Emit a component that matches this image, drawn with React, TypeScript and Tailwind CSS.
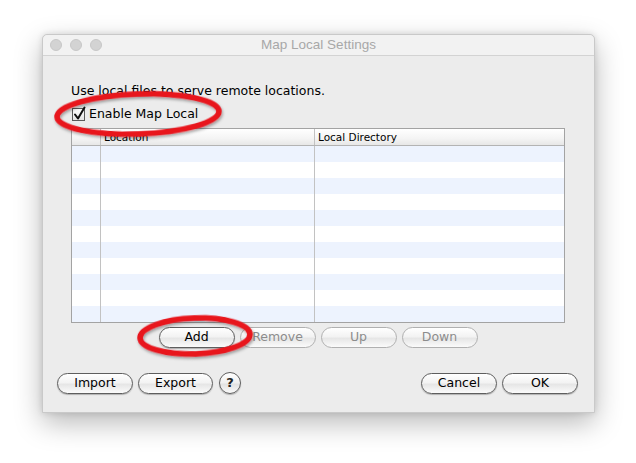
import React from "react";

const font = { fontFamily: '"DejaVu Sans", "Liberation Sans", sans-serif' };

function Btn({ label, w = 76, disabled = false }: { label: string; w?: number; disabled?: boolean }) {
  return (
    <div
      className={`h-[21px] rounded-full border flex items-center justify-center text-[12.5px] bg-[linear-gradient(#ffffff,#f3f3f3_45%,#e6e6e6_55%,#fbfbfb)] ${
        disabled
          ? "border-[#b0b0b0] text-[#8c8c8c]"
          : "border-[#5e5e5e] text-black shadow-[0_1px_1px_rgba(0,0,0,0.25)]"
      }`}
      style={{ width: w }}
    >
      {label}
    </div>
  );
}

export default function App() {
  const rows = Array.from({ length: 11 }, (_, i) => i);
  return (
    <div className="w-[636px] h-[463px] bg-white pl-[42px] pt-[34px] relative overflow-hidden" style={font}>
      <div className="w-[553px] h-[379px] bg-[#ececec] rounded-t-[5px] border border-[#c9c9c9] shadow-[0_10px_28px_rgba(0,0,0,0.28),0_0_6px_rgba(0,0,0,0.12)] flex flex-col">
        {/* title bar */}
        <div className="h-[21px] shrink-0 bg-[#f2f2f2] rounded-t-[5px] border-b border-[#d3d3d3] flex items-center relative">
          <div className="flex gap-[8px] pl-[7px]">
            <div className="w-[12px] h-[12px] rounded-full bg-[#d3d3d3] border border-[#c8c8c8]" />
            <div className="w-[12px] h-[12px] rounded-full bg-[#d3d3d3] border border-[#c8c8c8]" />
            <div className="w-[12px] h-[12px] rounded-full bg-[#d3d3d3] border border-[#c8c8c8]" />
          </div>
          <div
            className="absolute inset-0 flex items-center justify-center text-[13.5px] text-[#a8a8a8]"
            style={{ fontFamily: '"Liberation Sans", Arial, sans-serif' }}
          >
            Map Local Settings
          </div>
        </div>

        {/* body */}
        <div className="flex-1 flex flex-col">
          <div className="pl-[28px] pr-[29px] pt-[27px] flex flex-col">
            <div className="h-[16px] leading-[16px] text-[12.5px] text-black">Use local files to serve remote locations.</div>
            <div className="mt-[7px] h-[16px] flex items-center">
              <div className="w-[13px] h-[13px] border border-[#5a5a5a] bg-[linear-gradient(#ffffff,#e4e4e4)] relative ml-[1px]">
                <svg className="absolute -top-[3px] left-[0px]" width="14" height="15" viewBox="0 0 14 15">
                  <path d="M2 8.5 L5 12.5 L11.5 1.5" fill="none" stroke="#111" strokeWidth="2" strokeLinecap="round" strokeLinejoin="round" />
                </svg>
              </div>
              <span className="ml-[4px] text-[12.5px] text-black leading-[16px]">Enable Map Local</span>
            </div>

            {/* table */}
            <div className="mt-[6px] w-[494px] border border-[#a3a3a3] bg-white">
              <div className="h-[17px] flex border-b border-[#b3b3b3] bg-[linear-gradient(#ffffff,#f4f4f4_60%,#e7e7e7)] text-[10.5px] text-black leading-[16px]">
                <div className="w-[29px] border-r border-[#c2c2c2]" />
                <div className="w-[214px] border-r border-[#c2c2c2] pl-[3px]">Location</div>
                <div className="flex-1 pl-[3px]">Local Directory</div>
              </div>
              {rows.map((i) => (
                <div key={i} className={`h-[16px] flex ${i % 2 === 0 ? "bg-[#edf3fe]" : "bg-white"}`}>
                  <div className="w-[29px] border-r border-[#c2c2c2]" />
                  <div className="w-[214px] border-r border-[#c2c2c2]" />
                  <div className="flex-1" />
                </div>
              ))}
            </div>

            <div className="mt-[4px] w-[494px] flex justify-center gap-[5px]">
              <Btn label="Add" />
              <Btn label="Remove" disabled />
              <Btn label="Up" disabled />
              <Btn label="Down" disabled />
            </div>
          </div>

          <div className="mt-[24px] pl-[14px] pr-[16px] flex items-center">
            <Btn label="Import" />
            <div className="ml-[5px]">
              <Btn label="Export" w={75} />
            </div>
            <div className="ml-[6px] w-[22px] h-[22px] rounded-full border border-[#5e5e5e] bg-[linear-gradient(#ffffff,#f0f0f0_50%,#e2e2e2_55%,#fafafa)] shadow-[0_1px_1px_rgba(0,0,0,0.25)] flex items-center justify-center text-[13px] font-bold text-[#222]">
              ?
            </div>
            <div className="ml-auto flex gap-[5px]">
              <Btn label="Cancel" />
              <Btn label="OK" />
            </div>
          </div>
        </div>
      </div>

      {/* annotation ellipses */}
      <svg className="absolute left-0 top-0 pointer-events-none" width="636" height="463" viewBox="0 0 636 463">
        <defs>
          <filter id="sh" x="-20%" y="-50%" width="140%" height="200%">
            <feDropShadow dx="1" dy="2" stdDeviation="1.5" floodColor="#000" floodOpacity="0.35" />
          </filter>
        </defs>
        <ellipse cx="138" cy="114" rx="81" ry="20" transform="rotate(-2 138 114)" fill="none" stroke="#e8121b" strokeWidth="5.5" filter="url(#sh)" />
        <ellipse cx="195" cy="336" rx="55" ry="18" transform="rotate(-2 195 336)" fill="none" stroke="#e8121b" strokeWidth="5.5" filter="url(#sh)" />
      </svg>
    </div>
  );
}
